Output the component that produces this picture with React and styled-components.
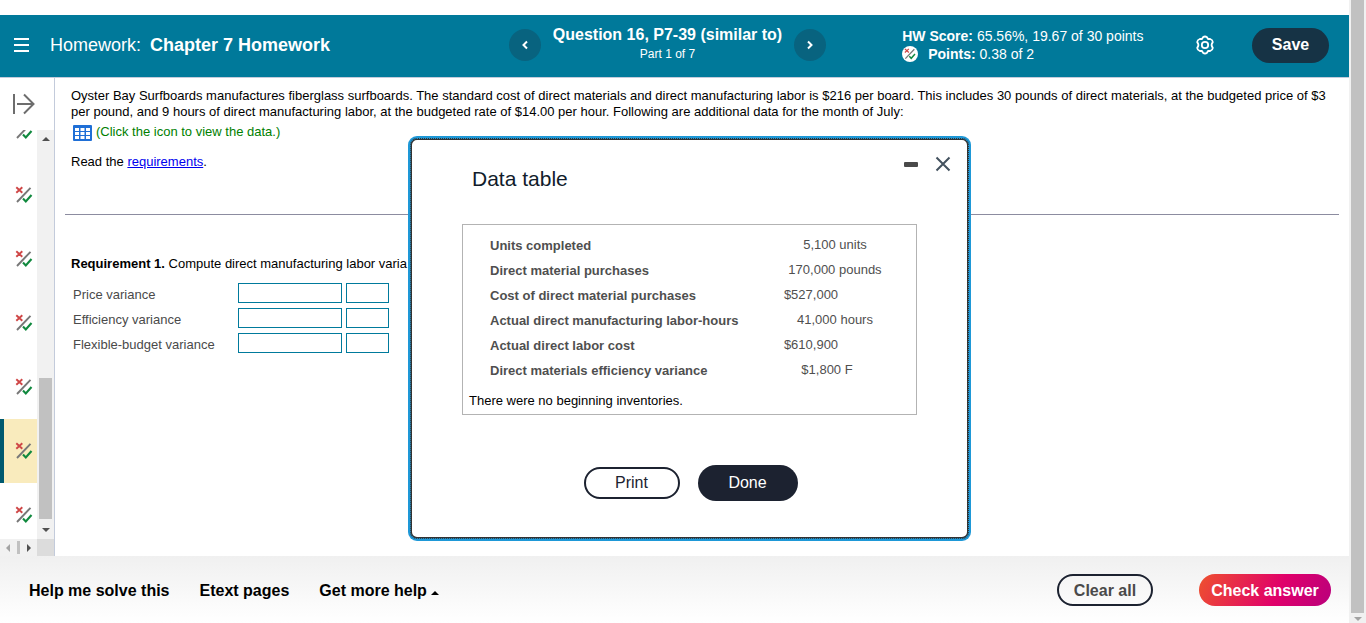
import React from 'react';
import styled, { createGlobalStyle, css } from 'styled-components';

const scoreItems = [1, 2, 3, 4, 5, 6, 7];
const activeItem = 6;

const tableRows = [
  { label: 'Units completed', value: '5,100 units' },
  { label: 'Direct material purchases', value: '170,000 pounds' },
  { label: 'Cost of direct material purchases', value: '$527,000', money: true },
  { label: 'Actual direct manufacturing labor-hours', value: '41,000 hours' },
  { label: 'Actual direct labor cost', value: '$610,900', money: true },
  { label: 'Direct materials efficiency variance', value: '$1,800 F', wide: true },
];

const answerRows = [
  { id: 'price', label: 'Price variance' },
  { id: 'efficiency', label: 'Efficiency variance' },
  { id: 'flexible', label: 'Flexible-budget variance' },
];

function PartialIcon({ size = 18 }) {
  return (
    <svg width={size} height={size} viewBox="0 0 18 18" fill="none" aria-hidden="true">
      <path d="M1.300 1.300L7.300 6.800M7.300 1.300L1.300 6.800" stroke="#cf4747" strokeWidth="1.9" />
      <path d="M2 16L15.500 1.800" stroke="#777" strokeWidth="1.9" />
      <path d="M8 12.500L10.800 15.500L16.500 9" stroke="#10893e" strokeWidth="2.100" />
    </svg>
  );
}

function MenuIcon() {
  return (
    <svg width="16" height="14" viewBox="0 0 16 14" aria-hidden="true">
      <path d="M0 1h15M0 7h15M0 13h15" stroke="#fff" strokeWidth="2" />
    </svg>
  );
}

function ExpandIcon() {
  return (
    <svg width="24" height="22" viewBox="0 0 24 22" fill="none" aria-hidden="true">
      <path d="M2 1v20M5 11h17M12 1.500l9.500 9.500L12 20.500" stroke="#6d6d6d" strokeWidth="2" />
    </svg>
  );
}

function Chevron({ right }) {
  return (
    <svg width="8" height="10" viewBox="0 0 8 10" fill="none" aria-hidden="true">
      <path d={right ? 'M2 1.500L5.500 5L2 8.500' : 'M6 1.500L2.500 5L6 8.500'} stroke="#fff" strokeWidth="2" />
    </svg>
  );
}

function GearIcon() {
  return (
    <svg width="20" height="20" viewBox="0 0 20 20" fill="none" stroke="#fff" strokeWidth="1.8" aria-hidden="true">
      <path
        d="M8 2.300Q10 .6 12 2.300L13 4L15.200 4Q17.600 4.800 17.800 7L16.800 9Q16.400 10 16.800 11L17.800 13Q17.600 15.200 15.200 16L13 16L12 17.700Q10 19.400 8 17.700L7 16L4.800 16Q2.400 15.200 2.200 13L3.200 11Q3.600 10 3.200 9L2.200 7Q2.400 4.800 4.800 4L7 4Z"
        strokeLinejoin="round"
      />
      <circle cx="10" cy="10" r="3.200" />
    </svg>
  );
}

function TableIcon() {
  return (
    <svg width="19" height="16" viewBox="0 0 19 16" aria-hidden="true">
      <rect width="19" height="16" rx="1" fill="#1f6fd6" />
      <path
        d="M2 3h4v3H2zM7.500 3h4v3H7.500zM13 3h4v3H13zM2 7h4v3H2zM7.500 7h4v3H7.500zM13 7h4v3H13zM2 11h4v3H2zM7.500 11h4v3H7.500zM13 11h4v3H13z"
        fill="#fff"
      />
    </svg>
  );
}

function Arrow({ dir, color = '#505050' }) {
  const paths = {
    up: 'M0 6L4 2L8 6Z',
    down: 'M0 2L4 6L8 2Z',
    left: 'M6 0L2 4L6 8Z',
    right: 'M2 0L6 4L2 8Z',
  };
  return (
    <svg width="8" height="8" viewBox="0 0 8 8" aria-hidden="true">
      <path d={paths[dir]} fill={color} />
    </svg>
  );
}

function Header() {
  return (
    <HeaderBar>
      <HeaderLeft>
        <IconButton aria-label="Menu">
          <MenuIcon />
        </IconButton>
        <Title>
          Homework: <strong>Chapter 7 Homework</strong>
        </Title>
      </HeaderLeft>
      <QuestionNav>
        <RoundButton aria-label="Previous question">
          <Chevron />
        </RoundButton>
        <QuestionTitle>
          <h2>Question 16, P7-39 (similar to)</h2>
          <p>Part 1 of 7</p>
        </QuestionTitle>
        <RoundButton aria-label="Next question">
          <Chevron right />
        </RoundButton>
      </QuestionNav>
      <HeaderRight>
        <Score>
          <p>
            <strong>HW Score:</strong> 65.56%, 19.67 of 30 points
          </p>
          <PointsRow>
            <Badge>
              <PartialIcon size={12} />
            </Badge>
            <span>
              <strong>Points:</strong> 0.38 of 2
            </span>
          </PointsRow>
        </Score>
        <HeaderActions>
          <IconButton aria-label="Settings">
            <GearIcon />
          </IconButton>
          <SaveButton>Save</SaveButton>
        </HeaderActions>
      </HeaderRight>
    </HeaderBar>
  );
}

function Sidebar() {
  return (
    <Rail>
      <ExpandButton aria-label="Expand question list">
        <ExpandIcon />
      </ExpandButton>
      <RailBody>
        <RailView>
          <RailList>
            {scoreItems.map((item) => (
              <RailItem key={item} $active={item === activeItem}>
                <IconButton aria-label={`Question ${item + 10}`}>
                  <PartialIcon />
                </IconButton>
              </RailItem>
            ))}
          </RailList>
        </RailView>
        <VerticalTrack>
          <Arrow dir="up" />
          <RailThumb />
          <Arrow dir="down" />
        </VerticalTrack>
      </RailBody>
      <RailBottom>
        <HorizontalTrack>
          <Arrow dir="left" color="#a3a3a3" />
          <HorizontalThumb />
          <Arrow dir="right" />
        </HorizontalTrack>
        <Corner />
      </RailBottom>
    </Rail>
  );
}

function DataDialog() {
  return (
    <Dialog role="dialog" aria-labelledby="dialog-title">
      <DialogControls>
        <IconButton aria-label="Minimize">
          <svg width="14" height="6" viewBox="0 0 14 6" aria-hidden="true">
            <rect width="14" height="5" y="1" rx="1" fill="#4a4a4a" />
          </svg>
        </IconButton>
        <IconButton aria-label="Close">
          <svg width="16" height="16" viewBox="0 0 16 16" aria-hidden="true">
            <path d="M1.500 1.500l13 13M14.500 1.500l-13 13" stroke="#44525f" strokeWidth="2" />
          </svg>
        </IconButton>
      </DialogControls>
      <DialogTitle id="dialog-title">Data table</DialogTitle>
      <DataBox>
        <DataTable>
          <tbody>
            {tableRows.map((row) => (
              <tr key={row.label}>
                <th scope="row">{row.label}</th>
                <ValueCell $money={row.money} $wide={row.wide}>
                  {row.value}
                </ValueCell>
              </tr>
            ))}
          </tbody>
        </DataTable>
        <p>There were no beginning inventories.</p>
      </DataBox>
      <DialogActions>
        <PrintButton>Print</PrintButton>
        <DoneButton>Done</DoneButton>
      </DialogActions>
    </Dialog>
  );
}

function App() {
  return (
    <>
      <GlobalStyle />
      <Page>
        <Main>
          <Header />
          <Body>
            <Sidebar />
            <Content>
              <Problem>
                <p>
                  Oyster Bay Surfboards manufactures fiberglass surfboards. The standard cost of direct materials
                  and direct manufacturing labor is $216 per board. This includes 30 pounds of direct materials, at
                  the budgeted price of $3 per pound, and 9 hours of direct manufacturing labor, at the budgeted
                  rate of $14.00 per hour. Following are additional data for the month of July:
                </p>
                <DataLink>
                  <TableIcon />
                  (Click the icon to view the data.)
                </DataLink>
                <ReadLine>
                  Read the <a href="#requirements">requirements</a>.
                </ReadLine>
              </Problem>
              <Divider />
              <Answer>
                <AnswerPrompt>
                  <strong>Requirement 1.</strong> Compute direct manufacturing labor varia
                </AnswerPrompt>
                <AnswerTable>
                  <tbody>
                    {answerRows.map((row) => (
                      <tr key={row.id}>
                        <th scope="row">
                          <label htmlFor={row.id}>{row.label}</label>
                        </th>
                        <td>
                          <AmountInput id={row.id} type="text" />
                        </td>
                        <td>
                          <TypeInput type="text" aria-label={`${row.label} type`} />
                        </td>
                      </tr>
                    ))}
                  </tbody>
                </AnswerTable>
              </Answer>
            </Content>
          </Body>
          <Footer>
            <FooterLinks>
              <FooterButton>Help me solve this</FooterButton>
              <FooterButton>Etext pages</FooterButton>
              <FooterButton>
                Get more help
                <Arrow dir="up" color="#000" />
              </FooterButton>
            </FooterLinks>
            <FooterActions>
              <ClearButton>Clear all</ClearButton>
              <CheckButton>Check answer</CheckButton>
            </FooterActions>
          </Footer>
        </Main>
        <PageTrack>
          <PageThumb />
          <Arrow dir="down" color="#a3a3a3" />
        </PageTrack>
        <DataDialog />
      </Page>
    </>
  );
}

export default App;

const GlobalStyle = createGlobalStyle`
  * {
    box-sizing: border-box;
  }

  body {
    margin: 0;
    background: #fff;
    color: #000;
    font-family: 'Liberation Sans', Arial, sans-serif;
    font-size: 13px;
    line-height: 16px;
  }

  p, h1, h2, ul {
    margin: 0;
    padding: 0;
  }

  button {
    font-family: inherit;
    cursor: pointer;
  }
`;

const Page = styled.div`
  display: flex;
  position: relative;
  min-height: 100vh;
`;

const Main = styled.div`
  flex: 1;
  min-width: 0;
  display: flex;
  flex-direction: column;
  padding-top: 15px;
`;

const HeaderBar = styled.header`
  display: grid;
  grid-template-columns: 1fr auto 1fr;
  align-items: center;
  height: 63px;
  padding: 0 20px 2px 14px;
  background: #00799a;
  border-bottom: 1px solid #c3cbdb;
  color: #fff;
`;

const HeaderLeft = styled.div`
  display: flex;
  align-items: center;
  gap: 20px;
`;

const IconButton = styled.button`
  display: flex;
  align-items: center;
  justify-content: center;
  padding: 0;
  border: none;
  background: none;
`;

const Title = styled.h1`
  font-size: 18px;
  font-weight: 400;
  line-height: 22px;

  strong {
    margin-left: 4px;
  }
`;

const QuestionNav = styled.nav`
  display: flex;
  align-items: center;
  gap: 12px;
  padding-right: 8px;
`;

const QuestionTitle = styled.div`
  padding-bottom: 2px;
  text-align: center;

  h2 {
    font-size: 16px;
    line-height: 20px;
  }

  p {
    font-size: 12px;
    line-height: 18px;
  }
`;

const RoundButton = styled.button`
  display: flex;
  align-items: center;
  justify-content: center;
  width: 32px;
  height: 32px;
  padding: 0;
  border: none;
  border-radius: 50%;
  background: #08637f;
`;

const HeaderRight = styled.div`
  display: flex;
  align-items: center;
  justify-content: space-between;
  padding-left: 68px;
`;

const Score = styled.div`
  font-size: 14px;
  line-height: 18px;
`;

const PointsRow = styled.p`
  display: flex;
  align-items: center;
  gap: 10px;
`;

const Badge = styled.span`
  display: flex;
  align-items: center;
  justify-content: center;
  width: 16px;
  height: 16px;
  border-radius: 50%;
  background: #fff;
`;

const HeaderActions = styled.div`
  display: flex;
  align-items: center;
  gap: 37px;
`;

const SaveButton = styled.button`
  width: 77px;
  height: 35px;
  border: none;
  border-radius: 18px;
  background: #163345;
  color: #fff;
  font-size: 16px;
  font-weight: 700;
`;

const Body = styled.div`
  flex: 1;
  display: flex;
  min-height: 0;
`;

const Rail = styled.aside`
  display: flex;
  flex-direction: column;
  width: 55px;
  border-right: 1px solid #c3cbdb;
`;

const ExpandButton = styled(IconButton)`
  height: 52px;
  padding-right: 6px;
`;

const RailBody = styled.div`
  flex: 1 1 0;
  display: flex;
  min-height: 0;
`;

const RailView = styled.div`
  flex: 1;
  overflow: hidden;
`;

const RailList = styled.ul`
  margin-top: -31px;
  list-style: none;
`;

const RailItem = styled.li`
  display: flex;
  align-items: center;
  height: 64px;
  padding-left: 15px;

  ${(props) =>
    props.$active &&
    css`
      padding-left: 11px;
      border-left: 4px solid #005a70;
      background: #f9ebbd;
    `}
`;

const VerticalTrack = styled.div`
  display: flex;
  flex-direction: column;
  align-items: center;
  justify-content: space-between;
  width: 17px;
  padding: 5px 0;
  background: #f1f1f1;
`;

const RailThumb = styled.div`
  width: 13px;
  height: 141px;
  margin: auto 0 7px;
  background: #c1c1c1;
`;

const RailBottom = styled.div`
  display: flex;
  height: 17px;
`;

const HorizontalTrack = styled.div`
  flex: 1;
  display: flex;
  align-items: center;
  justify-content: space-between;
  padding: 0 4px;
  background: #f1f1f1;
`;

const HorizontalThumb = styled.div`
  width: 3px;
  height: 13px;
  background: #c1c1c1;
`;

const Corner = styled.div`
  width: 17px;
  background: #dcdcdc;
`;

const Content = styled.main`
  flex: 1;
  min-width: 0;
  padding: 10px;
`;

const Problem = styled.section`
  padding: 0 6px;
`;

const DataLink = styled.p`
  display: flex;
  align-items: center;
  gap: 4px;
  height: 24px;
  padding-left: 2px;
  color: #008000;

  svg {
    margin-top: 2px;
  }
`;

const ReadLine = styled.p`
  margin-top: 10px;

  a {
    color: #0000ee;
  }
`;

const Divider = styled.hr`
  margin: 44px 0 0;
  border: none;
  border-top: 1px solid #8c8ca0;
`;

const Answer = styled.section`
  padding: 41px 6px 0;
`;

const AnswerPrompt = styled.p`
  white-space: nowrap;
`;

const AnswerTable = styled.table`
  margin-top: 9px;
  border-collapse: collapse;

  tr {
    height: 25px;
  }

  th {
    width: 167px;
    padding: 2px 0 0 2px;
    color: #4a4a4a;
    font-weight: 400;
    text-align: left;
  }

  td {
    padding: 0 4px 2px 0;
  }
`;

const AmountInput = styled.input`
  display: block;
  width: 104px;
  height: 20px;
  padding: 0 4px;
  border: 1px solid #007a9c;
  background: #fff;
`;

const TypeInput = styled(AmountInput)`
  width: 43px;
`;

const Footer = styled.footer`
  display: flex;
  align-items: center;
  justify-content: space-between;
  height: 67px;
  padding: 0 18px 0 29px;
  background: linear-gradient(#f0f0f0, #fff);
`;

const FooterLinks = styled.div`
  display: flex;
  gap: 30px;
  padding-top: 2px;
`;

const FooterButton = styled.button`
  display: flex;
  align-items: center;
  gap: 4px;
  padding: 0;
  border: none;
  background: none;
  color: #000;
  font-size: 16px;
  font-weight: 700;

  svg {
    margin-top: 4px;
  }
`;

const FooterActions = styled.div`
  display: flex;
  gap: 46px;
`;

const ClearButton = styled.button`
  width: 96px;
  height: 32px;
  padding: 2px 0 0;
  border: 2px solid #1c2230;
  border-radius: 16px;
  background: transparent;
  color: #4a4a4a;
  font-size: 16px;
  font-weight: 700;
`;

const CheckButton = styled.button`
  width: 132px;
  height: 32px;
  padding: 2px 0 0;
  border: none;
  border-radius: 16px;
  background: linear-gradient(115deg, #ee512e, #e0006a 60%, #b9007c);
  color: #fff;
  font-size: 16px;
  font-weight: 700;
`;

const PageTrack = styled.div`
  display: flex;
  flex-direction: column;
  align-items: center;
  gap: 2px;
  width: 17px;
  max-height: 100vh;
  background: #f1f1f1;
  overflow: hidden;
`;

const PageThumb = styled.div`
  flex: 1;
  width: 13px;
  background: #c1c1c1;
`;

const Dialog = styled.div`
  position: absolute;
  top: 138px;
  left: 50%;
  width: 559px;
  margin-left: -273px;
  padding: 20px 50px 36px;
  border: 2px solid #333;
  border-radius: 7px;
  outline: 1px dotted #1e98d7;
  outline-offset: -1px;
  background: #fff;
  box-shadow: 0 0 0 2px #1e98d7;
`;

const DialogControls = styled.div`
  display: flex;
  align-items: center;
  justify-content: flex-end;
  gap: 17px;
  height: 8px;
  margin-right: -34px;
`;

const DialogTitle = styled.h2`
  padding-left: 10px;
  color: #111c2b;
  font-size: 21px;
  font-weight: 400;
  line-height: 22px;
`;

const DataBox = styled.div`
  margin-top: 34px;
  padding: 8px 6px 5px;
  border: 1px solid #b3b3b3;
`;

const DataTable = styled.table`
  width: 100%;
  margin-bottom: 10px;
  border-collapse: collapse;
  color: #4f4f4f;

  tr {
    height: 25px;
  }

  th {
    padding: 0 0 0 21px;
    text-align: left;
  }
`;

const ValueCell = styled.td`
  width: 150px;
  padding: 0 0 2px;
  text-align: center;

  ${(props) =>
    props.$money &&
    css`
      padding-right: 48px;
    `}

  ${(props) =>
    props.$wide &&
    css`
      padding-right: 16px;
    `}
`;

const DialogActions = styled.div`
  display: flex;
  align-items: center;
  justify-content: center;
  gap: 18px;
  margin-top: 50px;
  padding-left: 2px;
`;

const PrintButton = styled.button`
  width: 96px;
  height: 32px;
  border: 2px solid #1c2230;
  border-radius: 16px;
  background: #fff;
  color: #1c2230;
  font-size: 16px;
`;

const DoneButton = styled.button`
  width: 100px;
  height: 36px;
  border: none;
  border-radius: 18px;
  background: #1c2230;
  color: #fff;
  font-size: 16px;
`;
